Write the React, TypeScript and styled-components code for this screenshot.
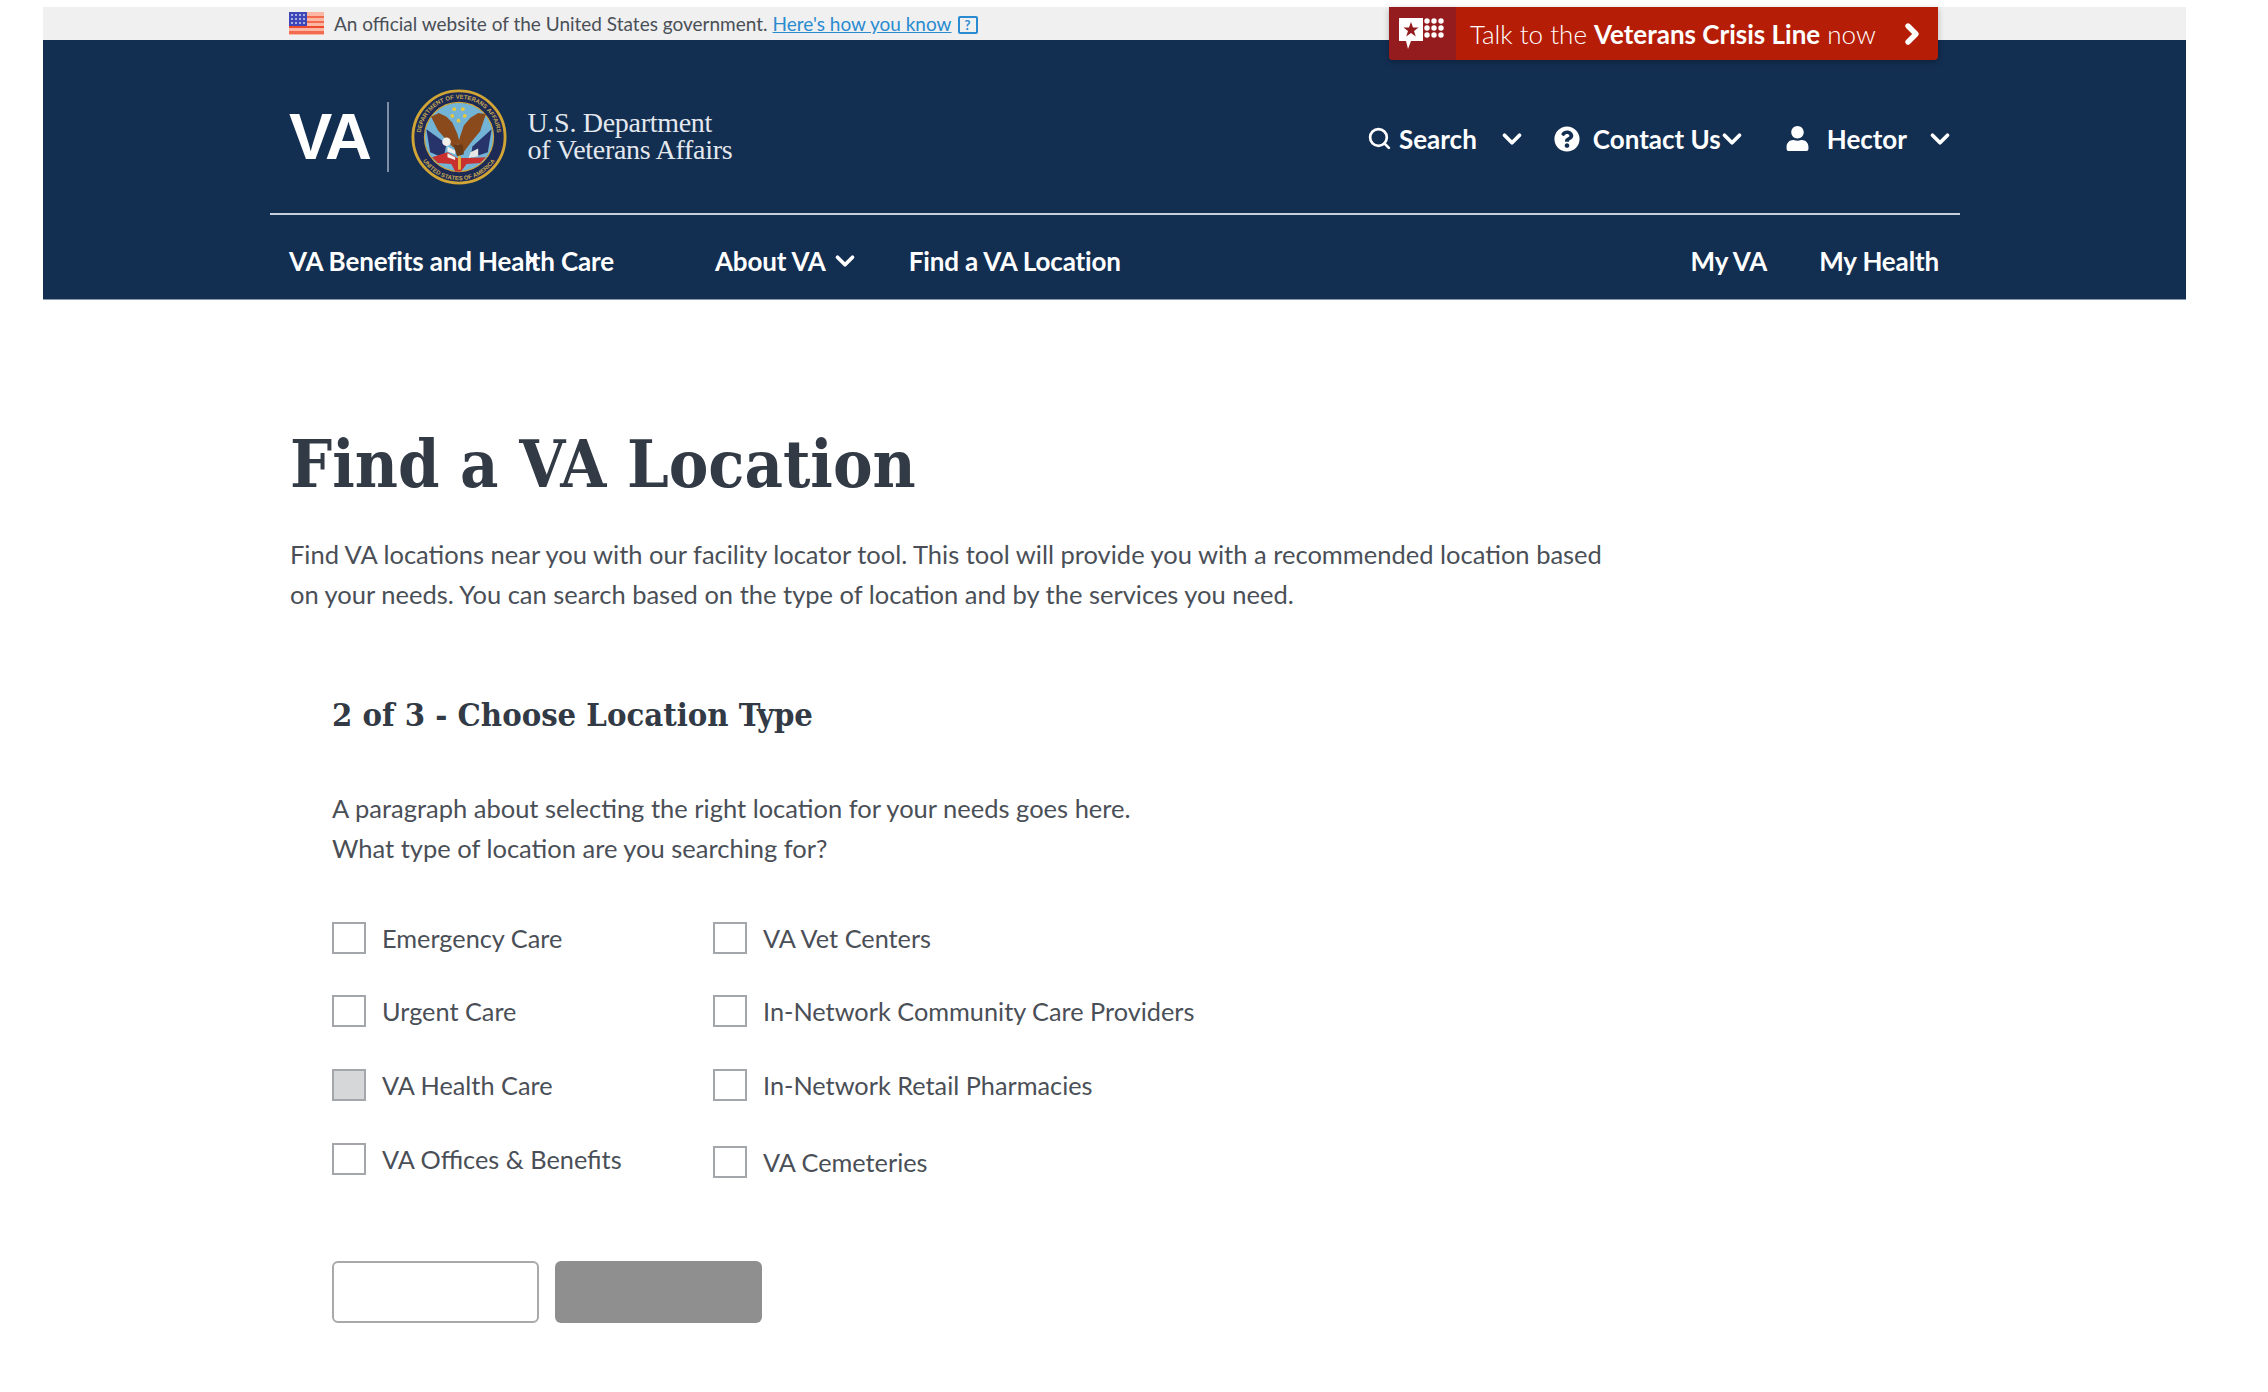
import styled, { createGlobalStyle } from 'styled-components';
import { ChevronDown, ChevronRight, Search } from 'lucide-react';
import { FaQuestionCircle, FaUser } from 'react-icons/fa';

const body = `Lato, "Noto Sans", sans-serif`;
const slab = `"DejaVu Serif Condensed", "DejaVu Serif", "Liberation Serif", serif`;

const GlobalStyle = createGlobalStyle`
  html, body { margin: 0; padding: 0; background: #ffffff; }
  body { font-family: ${body}; color: #323a45; }
  * { box-sizing: border-box; }
`;

// --- Header ---
const Frame = styled.div` width: 2143px; margin: 7px 0 0 43px; position: relative; `;
const TopBar = styled.div` height: 33px; background: #f0f0f0; display: flex; align-items: center; padding-left: 246px; font-size: 19px; color: #4a4f57; `;
const TopText = styled.span` margin-left: 10px; `;
const TopLink = styled.a` margin-left: 5px; color: #2a8bd0; text-decoration: underline; `;
const HelpBox = styled.span` margin-left: 6px; width: 20px; height: 18px; border: 2px solid #2a8bd0; border-radius: 2px; color: #2a8bd0; font-size: 13px; font-weight: 700; display: flex; align-items: center; justify-content: center; margin-top: 3px; `;

const CrisisButton = styled.a` position: absolute; top: 0; left: 1346px; width: 549px; height: 53px; display: flex; align-items: center; background: #b51d06; border-radius: 0 0 4px 4px; box-shadow: 0 2px 6px rgba(0,0,0,0.25); color: #fff; font-size: 26px; `;
const CrisisIcon = styled.span` width: 67px; height: 100%; background: #941b1e; border-radius: 0 0 0 4px; display: flex; align-items: center; justify-content: center; `;
const CrisisText = styled.span` margin-left: 14px; font-weight: 300; b { font-weight: 700; } `;
const CrisisArrow = styled.span` margin-left: auto; margin-right: 10px; display: flex; `;

const Masthead = styled.header` height: 260px; background: #122e51; border-bottom: 1px solid #8a98ab; `;
const MastInner = styled.div` width: 1690px; margin-left: 227px; `;
const UpperRow = styled.div` height: 175px; padding: 49px 5px 0 19px; border-bottom: 2px solid #c8d0da; display: flex; align-items: flex-start; `;
const Logo = styled.div` display: flex; align-items: center; height: 95px; `;
const VaMark = styled.span` font: 700 65px/78px "Liberation Sans", sans-serif; color: #fff; letter-spacing: -2.5px; margin-right: 18px; `;
const LogoRule = styled.span` width: 2px; height: 70px; background: #7d8ea5; margin-right: 22px; `;
const DeptName = styled.div` margin-left: 20px; font: 400 28px/26.5px "Liberation Serif", serif; color: #e4e8ee; letter-spacing: -0.3px; `;
const Actions = styled.div` margin-left: auto; height: 95px; margin-top: 2px; display: flex; align-items: center; `;
const Action = styled.a<{ $gap: number }>` display: flex; align-items: center; color: #fff; font-size: 26px; font-weight: 700; margin-left: ${({ $gap }) => $gap}px; `;
const ActionLabel = styled.span<{ $left: number; $right: number }>` margin-left: ${({ $left }) => $left}px; margin-right: ${({ $right }) => $right}px; `;

const LowerRow = styled.nav` height: 83px; padding: 8px 21px 0 19px; display: flex; align-items: center; color: #fff; font-size: 26px; font-weight: 700; letter-spacing: -0.15px; `;
const NavLink = styled.a<{ $left?: number }>` display: flex; align-items: center; position: relative; margin-left: ${({ $left }) => $left ?? 0}px; `;
const NavGroup = styled.div` margin-left: auto; display: flex; align-items: center; `;
const NavChevron = styled(ChevronDown)` margin-left: 4px; `;
const PointerMark = styled.svg` position: absolute; left: 236px; top: 8px; `;

// --- Main ---
const Main = styled.main` padding: 0 0 60px 247px; `;
const Title = styled.h1` margin: 131px 0 0; font: 700 66px/66px ${slab}; color: #323a45; `;
const Intro = styled.p` margin: 36.5px 0 0; width: 1330px; font-size: 25.5px; line-height: 40px; color: #4a4f57; `;
const Step = styled.section` padding-left: 42px; `;
const StepTitle = styled.h2` margin: 81.5px 0 0; font: 700 32.5px/40px ${slab}; color: #323a45; `;
const StepText = styled.p` margin: 52.5px 0 0; font-size: 25.5px; line-height: 40px; color: #4a4f57; `;
const OptionGrid = styled.div` margin-top: 54px; display: flex; `;
const OptionColumn = styled.div<{ $width: number }>` width: ${({ $width }) => $width}px; display: flex; flex-direction: column; `;
const Option = styled.label<{ $nudge?: number }>` height: 73.8px; display: flex; align-items: flex-start; gap: 16px; font-size: 25.3px; line-height: 32px; color: #4a4f57; padding-top: ${({ $nudge }) => $nudge ?? 0}px; `;
const Box = styled.span<{ $filled?: boolean }>` width: 34px; height: 32px; border: 2px solid #a3a6aa; background: ${({ $filled }) => ($filled ? '#d6d7d9' : '#fff')}; flex: none; `;
const Buttons = styled.div` margin-top: 44px; display: flex; gap: 16px; `;
const OutlineButton = styled.button` width: 207px; height: 62px; background: #fff; border: 2px solid #a9a9a9; border-radius: 6px; `;
const FilledButton = styled.button` width: 207px; height: 62px; background: #8f8f8f; border: none; border-radius: 6px; `;

const FlagIcon = () => (
  <svg width="35" height="23" viewBox="0 0 35 23">
    <rect width="35" height="23" fill="#fbb7a4" />
    <rect y="4" width="35" height="2" fill="#f26b4e" />
    <rect y="9" width="35" height="2" fill="#f26b4e" />
    <rect y="14" width="35" height="2" fill="#f04a2e" />
    <rect y="19" width="35" height="3" fill="#f26b4e" />
    <rect width="18" height="14" fill="#3d47b8" />
    {[3, 7, 11].map(y => [3, 7, 11, 15].map(x => <circle key={`${x}-${y}`} cx={x} cy={y} r="0.9" fill="#dfe3f5" />))}
  </svg>
);

const CrisisGlyph = () => (
  <svg width="48" height="31" viewBox="0 0 48 31">
    <path d="M0 0H24V23H12L9 31L7 23H0Z" fill="#fff" />
    <path d="M12 4L14 9.5H19.5L15 13L16.8 18.5L12 15L7.2 18.5L9 13L4.5 9.5H10Z" fill="#941b1e" />
    {[3, 10, 17].map(y => [28, 35, 42].map(x => <circle key={`${x}-${y}`} cx={x} cy={y} r="2.7" fill="#fff" />))}
  </svg>
);

const VaSeal = () => (
  <svg width="96" height="96" viewBox="0 0 100 100">
    <defs>
      <path id="sealTop" d="M11.8 62A40 40 0 1 1 88.2 62" />
      <path id="sealBottom" d="M5 50A45 45 0 0 0 95 50" />
    </defs>
    <circle cx="50" cy="50" r="48" fill="#1c2a55" stroke="#d0a536" strokeWidth="3" />
    <text fontSize="6.2" fontWeight="700" fill="#c8a850" fontFamily="Liberation Sans, sans-serif">
      <textPath href="#sealTop" startOffset="50%" textAnchor="middle">DEPARTMENT OF VETERANS AFFAIRS</textPath>
    </text>
    <text fontSize="6.2" fontWeight="700" fill="#c8a850" fontFamily="Liberation Sans, sans-serif">
      <textPath href="#sealBottom" startOffset="50%" textAnchor="middle">UNITED STATES OF AMERICA</textPath>
    </text>
    <circle cx="50" cy="50" r="36" fill="#72b3d6" stroke="#d0a536" strokeWidth="1.2" />
    {[[45, 21], [54, 21], [43, 28], [56, 28], [49.5, 33]].map(([x, y]) => <circle key={`${x}-${y}`} cx={x} cy={y} r="2" fill="#e8c83e" />)}
    <path d="M16 42L37 57L34 72L20 66Z" fill="#27336b" />
    <path d="M84 42L64 60L62 72L80 66Z" fill="#27336b" />
    <path d="M21 29L29 25L37 29L43 35L48 46L51 56L44 61L36 52L28 43Z" fill="#8a4a1c" />
    <path d="M78 26L70 25L62 30L55 38L51 50L47 67L54 67L63 55L72 44Z" fill="#8a4a1c" />
    <path d="M44 58L54 58L55 68L48 70Z" fill="#6b3a16" />
    <circle cx="37" cy="55" r="4.5" fill="#f2f0ea" />
    <path d="M62 66L70 62L70 70L60 72Z" fill="#e6e6e6" />
    <path d="M22 71L38 66L48 72L62 72L78 71L72 77L58 78L52 86H46L42 78L28 77Z" fill="#c8312f" />
    <path d="M38 60L46 64L46 68L38 65ZM38 67L46 71L46 74L38 71Z" fill="#f2f0ea" />
    <path d="M49 70L52 70L52 84L49 84Z" fill="#e2b23a" />
  </svg>
);

const App = () => (
  <>
    <GlobalStyle />
    <Frame>
      <TopBar>
        <FlagIcon />
        <TopText>An official website of the United States government.</TopText>
        <TopLink>Here's how you know</TopLink>
        <HelpBox>?</HelpBox>
      </TopBar>
      <CrisisButton>
        <CrisisIcon><CrisisGlyph /></CrisisIcon>
        <CrisisText>Talk to the <b>Veterans Crisis Line</b> now</CrisisText>
        <CrisisArrow><ChevronRight size={32} strokeWidth={4} /></CrisisArrow>
      </CrisisButton>
      <Masthead>
        <MastInner>
          <UpperRow>
            <Logo>
              <VaMark>VA</VaMark>
              <LogoRule />
              <VaSeal />
              <DeptName>U.S. Department<br />of Veterans Affairs</DeptName>
            </Logo>
            <Actions>
              <Action $gap={0}>
                <Search size={25} strokeWidth={2.6} />
                <ActionLabel $left={7} $right={20}>Search</ActionLabel>
                <ChevronDown size={30} strokeWidth={3} />
              </Action>
              <Action $gap={27}>
                <FaQuestionCircle size={26} />
                <ActionLabel $left={13} $right={-4}>Contact Us</ActionLabel>
                <ChevronDown size={30} strokeWidth={3} />
              </Action>
              <Action $gap={38}>
                <FaUser size={25} />
                <ActionLabel $left={17} $right={18}>Hector</ActionLabel>
                <ChevronDown size={30} strokeWidth={3} />
              </Action>
            </Actions>
          </UpperRow>
          <LowerRow>
            <NavLink>
              VA Benefits and Health Care
              <PointerMark width="14" height="14" viewBox="0 0 14 14">
                <path d="M2 1L12 13M12 2L2 12" stroke="#fff" strokeWidth="2.4" />
              </PointerMark>
            </NavLink>
            <NavLink $left={101}>About VA<NavChevron size={30} strokeWidth={3} /></NavLink>
            <NavLink $left={49}>Find a VA Location</NavLink>
            <NavGroup>
              <NavLink>My VA</NavLink>
              <NavLink $left={52}>My Health</NavLink>
            </NavGroup>
          </LowerRow>
        </MastInner>
      </Masthead>
      <Main>
        <Title>Find a VA Location</Title>
        <Intro>Find VA locations near you with our facility locator tool. This tool will provide you with a recommended location based on your needs. You can search based on the type of location and by the services you need.</Intro>
        <Step>
          <StepTitle>2 of 3 - Choose Location Type</StepTitle>
          <StepText>A paragraph about selecting the right location for your needs goes here.<br />What type of location are you searching for?</StepText>
          <OptionGrid>
            <OptionColumn $width={381}>
              <Option><Box />Emergency Care</Option>
              <Option><Box />Urgent Care</Option>
              <Option><Box $filled />VA Health Care</Option>
              <Option><Box />VA Offices &amp; Benefits</Option>
            </OptionColumn>
            <OptionColumn $width={600}>
              <Option><Box />VA Vet Centers</Option>
              <Option><Box />In-Network Community Care Providers</Option>
              <Option><Box />In-Network Retail Pharmacies</Option>
              <Option $nudge={3}><Box />VA Cemeteries</Option>
            </OptionColumn>
          </OptionGrid>
          <Buttons>
            <OutlineButton />
            <FilledButton />
          </Buttons>
        </Step>
      </Main>
    </Frame>
  </>
);

export default App;
